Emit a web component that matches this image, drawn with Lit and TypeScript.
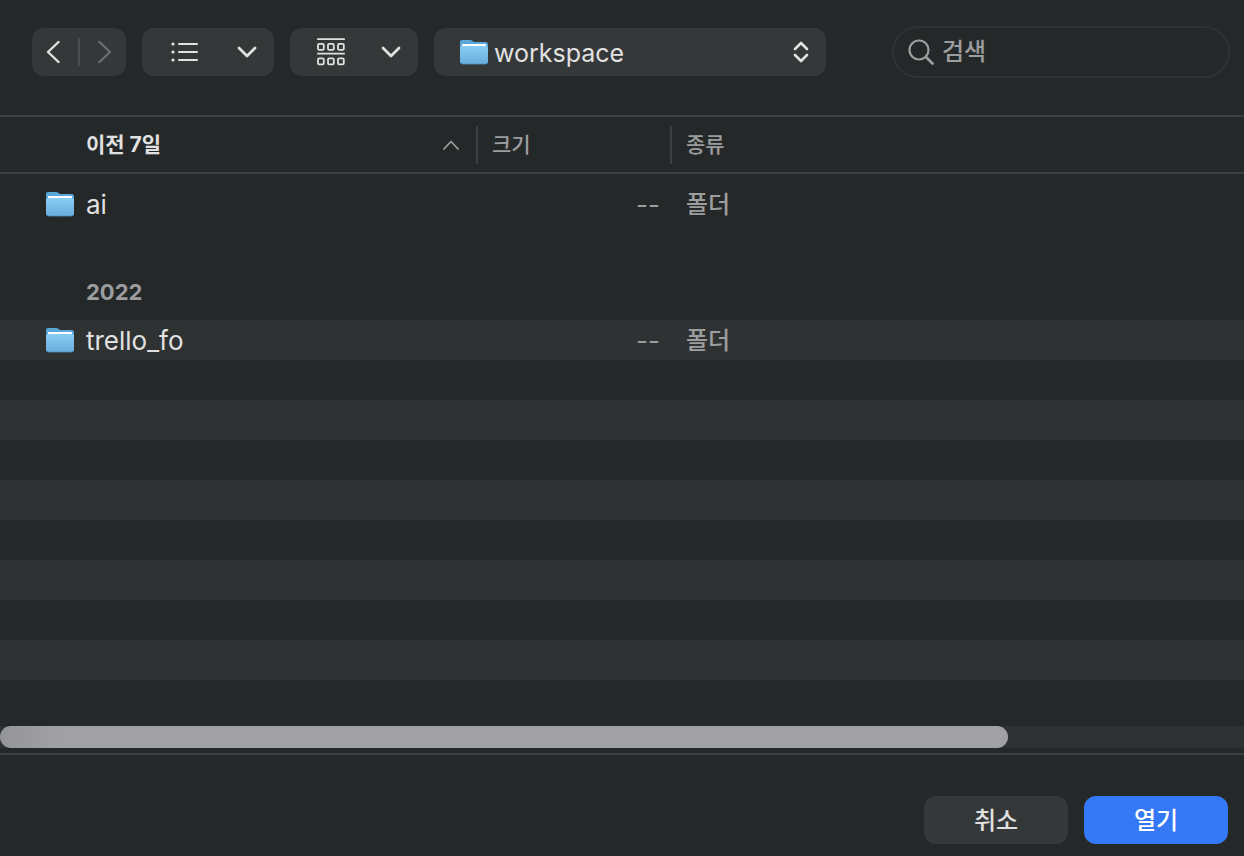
import { LitElement, html, css, svg } from "lit";
import { customElement, property, state } from "lit/decorators.js";
import { classMap } from "lit/directives/class-map.js";

interface Entry {
  name: string;
  size: string;
  kind: string;
}

const RECENT: Entry[] = [{ name: "ai", size: "--", kind: "폴더" }];
const OLDER: Entry[] = [{ name: "trello_fo", size: "--", kind: "폴더" }];
const EMPTY_ROWS = 8;

@customElement("folder-icon")
class FolderIcon extends LitElement {
  static styles = css`
    :host {
      display: block;
      width: 28px;
      height: 26px;
    }
    svg {
      display: block;
    }
  `;
  render() {
    return html`<svg width="28" height="26" viewBox="0 0 28 26" aria-hidden="true">
      <defs>
        <linearGradient id="front" x1="0" y1="0" x2="0" y2="1">
          <stop offset="0" stop-color="#8accf3" />
          <stop offset="1" stop-color="#67afde" />
        </linearGradient>
      </defs>
      <path d="M0 3Q0 1 2 1H10Q11.500 1 12.500 2Q13.500 3 15 3H25.500Q28 3 28 5.500V12H0Z" fill="#5aa7da" />
      <rect x="2" y="5" width="24" height="5" rx="1" fill="#fff" />
      <path d="M0 9Q0 7 2 7H26Q28 7 28 9V22.500Q28 25 25.500 25H2.500Q0 25 0 22.500Z" fill="url(#front)" />
      <path d="M1 24Q1.800 25 3 25H25Q26.200 25 27 24" fill="none" stroke="#4e8fba" stroke-width=".8" />
    </svg>`;
  }
}

@customElement("line-icon")
class LineIcon extends LitElement {
  @property() name = "";
  static styles = css`
    :host {
      display: block;
    }
    svg {
      display: block;
      fill: none;
      stroke: currentColor;
      stroke-linecap: round;
      stroke-linejoin: round;
    }
  `;
  render() {
    switch (this.name) {
      case "back":
        return html`<svg width="14" height="24" viewBox="0 0 14 24" stroke-width="2.4"><path d="M12.500 2L2 12L12.500 22" /></svg>`;
      case "forward":
        return html`<svg width="14" height="24" viewBox="0 0 14 24" stroke-width="2.4"><path d="M1.500 2L12 12L1.500 22" /></svg>`;
      case "down":
        return html`<svg width="20" height="12" viewBox="0 0 20 12" stroke-width="2.8"><path d="M2 2L10 10L18 2" /></svg>`;
      case "up":
        return html`<svg width="16" height="10" viewBox="0 0 16 10" stroke-width="1.8"><path d="M1 9L8 1.500L15 9" /></svg>`;
      case "updown":
        return html`<svg width="16" height="22" viewBox="0 0 16 22" stroke-width="2.6"><path d="M2 8L8 2L14 8M2 14L8 20L14 14" /></svg>`;
      case "list":
        return html`<svg width="28" height="20" viewBox="0 0 28 20" stroke-width="2">
          <path d="M8 2H26M8 10H26M8 18H26" />
          <g fill="currentColor" stroke="none"><circle cx="2" cy="2" r="1.600" /><circle cx="2" cy="10" r="1.600" /><circle cx="2" cy="18" r="1.600" /></g>
        </svg>`;
      case "group":
        return html`<svg width="28" height="28" viewBox="0 0 28 28" stroke-width="1.8">
          <path d="M.900 1.200H27.100M.900 15.700H27.100" />
          ${[5.9, 20.4].map((y) =>
            [1, 11, 21].map((x) => svg`<rect x=${x} y=${y} width="5.800" height="6" rx="1.200" />`)
          )}
        </svg>`;
      default:
        return html`<svg width="26" height="26" viewBox="0 0 26 26" stroke-width="2.2">
          <circle cx="11" cy="11" r="9.500" /><path d="M18 18L24.500 24.500" stroke-width="2.800" />
        </svg>`;
    }
  }
}

@customElement("app-root")
class AppRoot extends LitElement {
  @state() private query = "";

  static styles = css`
    :host {
      --bg: #252829;
      --control: #353839;
      --stripe: #2f3233;
      --line: #3d4041;
      --text: #e1e1e1;
      --muted: #9c9d9e;
      display: block;
      font-family: Inter, "Noto Sans CJK KR", sans-serif;
      font-size: 26px;
      line-height: 40px;
      color: var(--text);
      background: var(--bg);
    }
    .dialog {
      display: flex;
      flex-direction: column;
      min-height: 100vh;
    }
    button,
    select,
    input {
      font: inherit;
      color: inherit;
      border: 0;
      margin: 0;
      padding: 0;
      background: none;
      outline: none;
    }
    .toolbar {
      display: flex;
      align-items: center;
      gap: 16px;
      padding: 26px 14px 37px 32px;
      border-bottom: 2px solid var(--line);
    }
    .control {
      display: flex;
      flex: none;
      align-items: center;
      height: 48px;
      border-radius: 12px;
      background: var(--control);
    }
    .nav button {
      display: flex;
      align-items: center;
      width: 46px;
      height: 48px;
      padding: 0 14px;
    }
    .nav button:disabled {
      justify-content: flex-end;
      color: #6a6d6e;
    }
    .rule {
      width: 2px;
      height: 28px;
      background: #4b4e4f;
    }
    .view {
      justify-content: space-between;
    }
    .list {
      width: 132px;
      padding: 0 17px 0 29px;
    }
    .group {
      width: 128px;
      padding: 0 17px 0 27px;
    }
    .location {
      display: grid;
      grid-template-columns: 26px 28px 1fr 16px 17px;
      width: 392px;
    }
    .location folder-icon {
      grid-area: 1 / 2;
    }
    .location line-icon {
      grid-area: 1 / 4;
    }
    .location select {
      grid-area: 1 / 1 / 2 / 6;
      width: 100%;
      height: 48px;
      padding: 2px 0 0 60px;
      font-size: 25px;
      appearance: none;
    }
    .location folder-icon,
    .location line-icon {
      pointer-events: none;
      z-index: 1;
    }
    .search {
      box-sizing: border-box;
      display: flex;
      align-items: center;
      gap: 8px;
      flex: 0 1 338px;
      min-width: 0;
      height: 52px;
      margin-left: auto;
      padding: 0 14px;
      border: 2px solid #2f3233;
      border-radius: 26px;
      color: var(--muted);
    }
    .search line-icon {
      flex: none;
    }
    .search input {
      flex: 1;
      width: 100%;
      min-width: 0;
      height: 40px;
      font-size: 24px;
      font-weight: 500;
    }
    .search input::placeholder {
      color: var(--muted);
      opacity: 1;
    }
    table {
      width: 100%;
      table-layout: fixed;
      border-spacing: 0;
    }
    th,
    td {
      padding: 0;
      text-align: left;
    }
    .name {
      width: 478px;
    }
    .size {
      width: 194px;
    }
    thead th {
      height: 55px;
      border-bottom: 2px solid var(--line);
      font-size: 21px;
      font-weight: 500;
      color: var(--muted);
    }
    .head {
      display: flex;
      align-items: center;
      justify-content: space-between;
      height: 38px;
      padding-left: 14px;
      border-right: 2px solid var(--line);
    }
    .head.first {
      padding: 0 17px 0 86px;
      font-weight: 700;
      color: var(--text);
    }
    .head line-icon {
      color: var(--muted);
    }
    .head.last {
      border: 0;
    }
    .lead td {
      height: 10px;
    }
    .row td {
      height: 40px;
      color: var(--muted);
    }
    .striped td {
      background: var(--stripe);
    }
    .row .label {
      display: block;
      padding-top: 2px;
      line-height: 38px;
    }
    .row .count {
      padding-right: 12px;
      text-align: right;
    }
    .row .kind {
      padding-left: 14px;
      font-size: 24px;
      font-weight: 500;
    }
    .file {
      display: flex;
      align-items: center;
      gap: 12px;
      padding-left: 46px;
      color: var(--text);
    }
    .section th {
      padding: 48px 0 8px 86px;
      font-size: 22px;
      font-weight: 700;
      color: var(--muted);
    }
    .space {
      flex: 1;
    }
    .track {
      height: 22px;
      margin-bottom: 5px;
      background: var(--stripe);
    }
    .thumb {
      width: 81%;
      height: 22px;
      border-radius: 11px;
      background: linear-gradient(90deg, #949596, #a1a1a3 60px);
    }
    .footer {
      display: flex;
      justify-content: flex-end;
      gap: 16px;
      padding: 41px 16px 12px;
      border-top: 2px solid var(--line);
    }
    .action {
      width: 144px;
      height: 48px;
      padding-top: 2px;
      border-radius: 12px;
      background: var(--control);
      font-size: 24px;
      font-weight: 500;
    }
    .action.primary {
      background: #3478f6;
      color: #fff;
    }
  `;

  private row(entry: Entry, striped: boolean) {
    return html`<tr class=${classMap({ row: true, striped })}>
      <td><div class="file"><folder-icon></folder-icon><span class="label">${entry.name}</span></div></td>
      <td class="count"><span class="label">${entry.size}</span></td>
      <td class="kind"><span class="label">${entry.kind}</span></td>
    </tr>`;
  }

  render() {
    return html`<main class="dialog">
      <header class="toolbar">
        <div class="control nav">
          <button aria-label="뒤로"><line-icon name="back"></line-icon></button>
          <span class="rule"></span>
          <button aria-label="앞으로" disabled><line-icon name="forward"></line-icon></button>
        </div>
        <button class="control view list" aria-label="목록 보기">
          <line-icon name="list"></line-icon><line-icon name="down"></line-icon>
        </button>
        <button class="control view group" aria-label="그룹 보기">
          <line-icon name="group"></line-icon><line-icon name="down"></line-icon>
        </button>
        <div class="control location">
          <folder-icon></folder-icon>
          <select aria-label="위치"><option>workspace</option></select>
          <line-icon name="updown"></line-icon>
        </div>
        <label class="search">
          <line-icon name="search"></line-icon>
          <input
            type="text"
            aria-label="검색"
            placeholder="검색"
            .value=${this.query}
            @input=${(e: Event) => (this.query = (e.target as HTMLInputElement).value)}
          />
        </label>
      </header>
      <table>
        <thead>
          <tr>
            <th class="name"><div class="head first">이전 7일<line-icon name="up"></line-icon></div></th>
            <th class="size"><div class="head">크기</div></th>
            <th><div class="head last">종류</div></th>
          </tr>
        </thead>
        <tbody>
          <tr class="lead"><td colspan="3"></td></tr>
          ${RECENT.map((entry) => this.row(entry, false))}
          <tr class="section"><th colspan="3">2022</th></tr>
          ${OLDER.map((entry) => this.row(entry, true))}
          ${Array.from(
            { length: EMPTY_ROWS },
            (_, i) => html`<tr class=${classMap({ row: true, striped: i % 2 === 1 })}><td colspan="3"></td></tr>`
          )}
        </tbody>
      </table>
      <div class="space"></div>
      <div class="track"><div class="thumb"></div></div>
      <footer class="footer">
        <button class="action">취소</button>
        <button class="action primary">열기</button>
      </footer>
    </main>`;
  }
}
